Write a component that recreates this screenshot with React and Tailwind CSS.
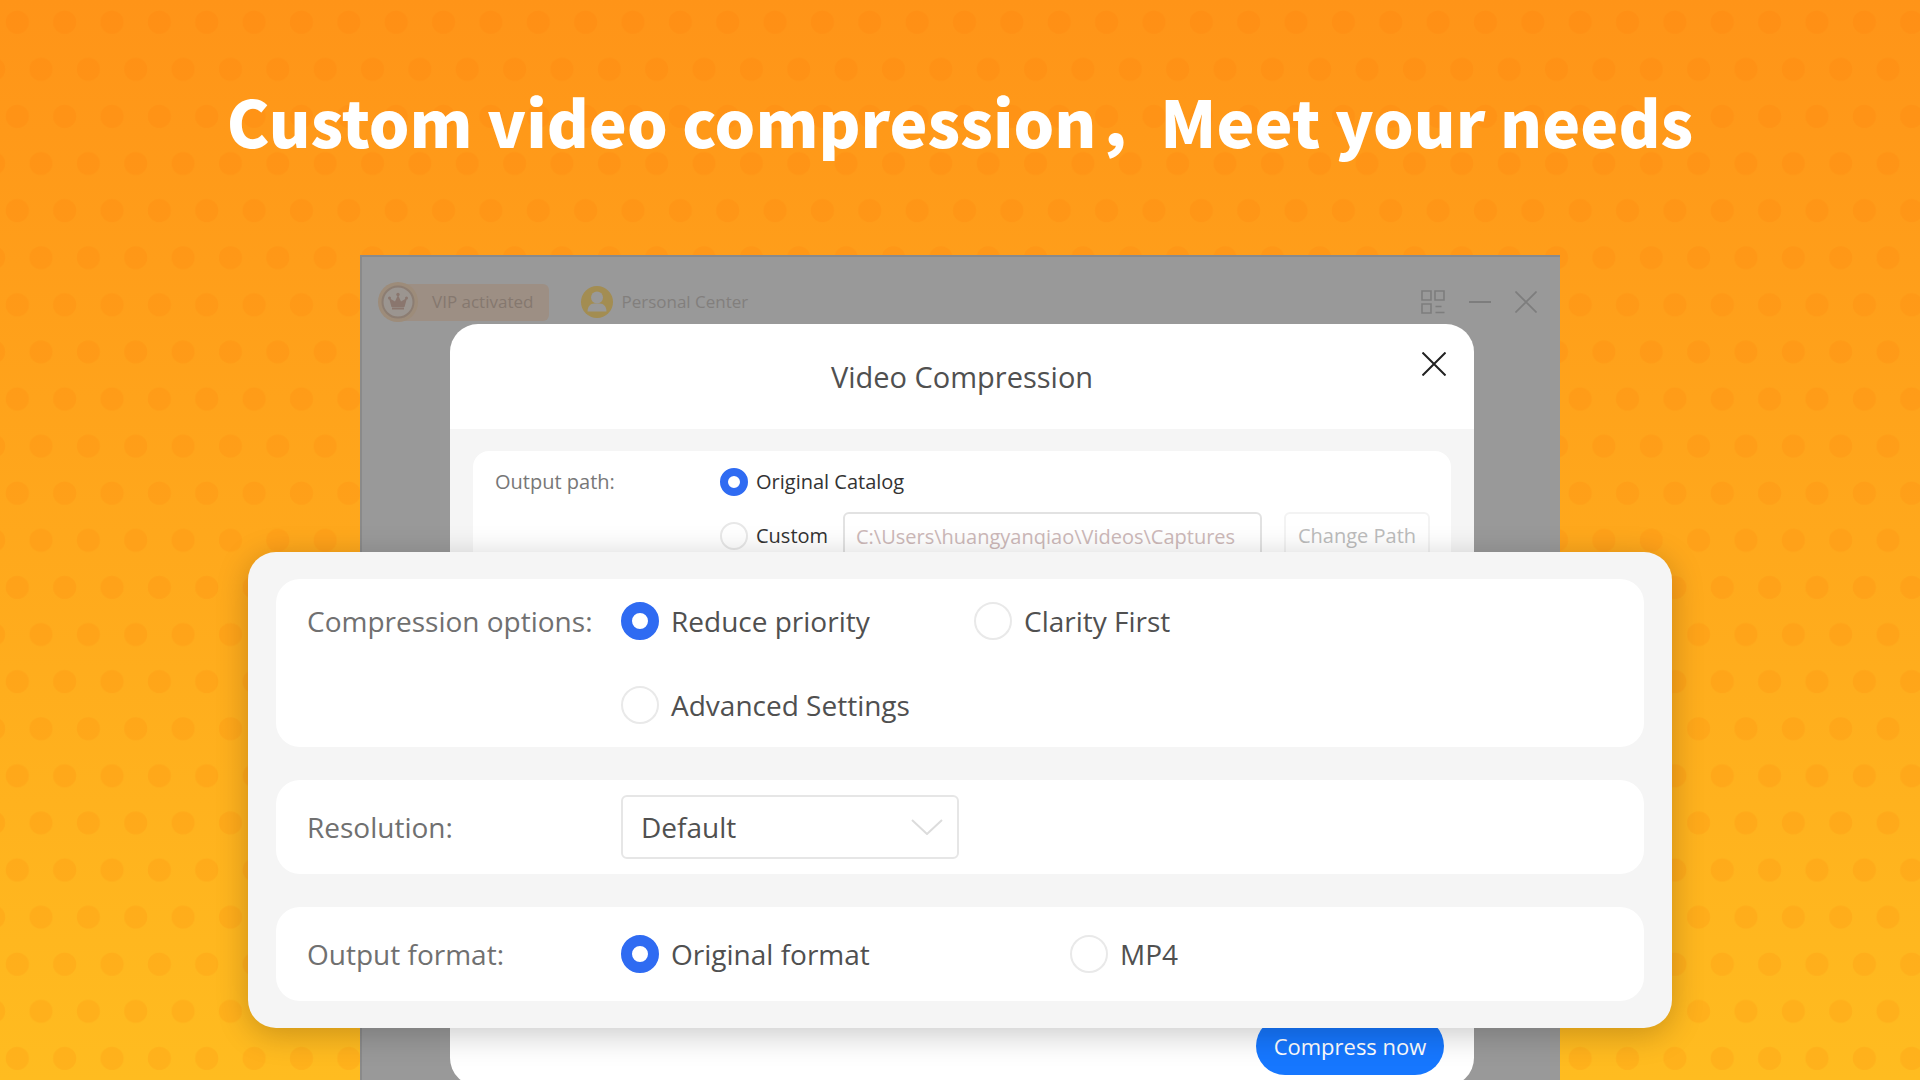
import React from 'react';

const Background = () => (
  <svg className="absolute inset-0 h-full w-full" aria-hidden="true">
    <defs>
      <pattern id="dots" width="47.36" height="94.2" patternUnits="userSpaceOnUse">
        <circle cx="17.3" cy="22.2" r="11.6" fill="#ff7000" fillOpacity="0.12" />
        <circle cx="41" cy="69.3" r="11.6" fill="#ff7000" fillOpacity="0.12" />
        <circle cx="-6.36" cy="69.3" r="11.6" fill="#ff7000" fillOpacity="0.12" />
      </pattern>
    </defs>
    <rect width="100%" height="100%" fill="url(#dots)" />
  </svg>
);

const CrossIcon = ({ className, strokeWidth }) => (
  <svg className={className} viewBox="0 0 24 24" fill="none" stroke="currentColor" strokeWidth={strokeWidth}>
    <path d="M0.5 0.5l23 23M23.5 0.5l-23 23" />
  </svg>
);

const CrownIcon = () => (
  <svg className="h-10 w-10" viewBox="0 0 40 40" fill="none">
    <circle cx="20" cy="20" r="20" fill="#9d8c7a" />
    <circle cx="20" cy="20" r="15.500" fill="#9b9590" stroke="#8c7d72" strokeWidth="2" />
    <path d="M13.500 25l-2.500-9 6 3.500L20 13l3 6.500 6-3.500-2.500 9z" fill="#8a766e" />
    <path d="M14 26.500h12" stroke="#8a766e" strokeWidth="2" />
    <circle cx="11.500" cy="16" r="1.500" fill="#8a766e" />
    <circle cx="20" cy="12.500" r="1.700" fill="#8a766e" />
    <circle cx="28.500" cy="16" r="1.500" fill="#8a766e" />
  </svg>
);

const UserIcon = () => (
  <svg className="h-8 w-8" viewBox="0 0 32 32" fill="none">
    <circle cx="16" cy="16" r="16" fill="#a38d52" />
    <circle cx="16" cy="11.500" r="6" fill="#999" />
    <path d="M6.500 25.500c0-5 3-8 6.500-8h6c3.500 0 6.500 3 6.500 8z" fill="#999" />
  </svg>
);

const LayoutIcon = () => (
  <svg className="h-6 w-6" viewBox="0 0 24 24" fill="none" stroke="currentColor" strokeWidth="1.600">
    <path d="M1 1h9v9H1zM14 1h9v9h-9zM1 14h9v9H1zM14.500 16.500h6M14.500 22.500h9" />
  </svg>
);

const SmallRadio = ({ label, checked }) => (
  <label className="flex items-center gap-2 text-[#333]">
    <input
      type="radio"
      name="path"
      defaultChecked={checked}
      className="h-7 w-7 appearance-none rounded-full border-2 border-[#e8e8e8] bg-white checked:border-8 checked:border-[#2f6bf2]"
    />
    {label}
  </label>
);

const Radio = ({ name, label, checked }) => (
  <label className="flex items-center gap-3 text-[#505050]">
    <input
      type="radio"
      name={name}
      defaultChecked={checked}
      className="h-[38px] w-[38px] appearance-none rounded-full border-2 border-[#e9e9e9] bg-white checked:border-[11px] checked:border-[#2f6bf2]"
    />
    {label}
  </label>
);

const Row = ({ label, htmlFor, children }) => (
  <div className="flex min-h-[94px] items-center rounded-3xl bg-white px-[31px]">
    {htmlFor ? (
      <label htmlFor={htmlFor} className="w-[314px] shrink-0">{label}</label>
    ) : (
      <span className="w-[314px] shrink-0">{label}</span>
    )}
    {children}
  </div>
);

const OptionsPanel = () => (
  <div className="absolute top-[297px] left-1/2 flex w-[1424px] -translate-x-1/2 flex-col gap-[33px] rounded-[28px] bg-[#f5f5f5] px-7 py-[27px] text-[28px] text-[#707070] shadow-[0_6px_32px_rgba(0,0,0,0.22)]">
    <div className="flex items-start rounded-3xl bg-white px-[31px] py-[18px]">
      <span className="w-[314px] shrink-0 leading-[48px]">Compression options:</span>
      <div className="flex flex-wrap gap-y-9">
        <div className="flex h-12 w-[353px] items-center">
          <Radio name="compression" label="Reduce priority" checked />
        </div>
        <div className="flex h-12 items-center">
          <Radio name="compression" label="Clarity First" />
        </div>
        <div className="flex h-12 w-full items-center">
          <Radio name="compression" label="Advanced Settings" />
        </div>
      </div>
    </div>

    <Row label="Resolution:" htmlFor="resolution">
      <div className="relative">
        <select
          id="resolution"
          className="block h-16 w-[338px] appearance-none rounded-md border-2 border-[#e6e6e6] bg-white px-[18px] text-[#505050]"
        >
          <option>Default</option>
        </select>
        <svg
          className="pointer-events-none absolute top-6 right-4 h-4 w-8"
          viewBox="0 0 32 16"
          fill="none"
          stroke="#dcdcdc"
          strokeWidth="2"
        >
          <path d="M1 1l15 14L31 1" />
        </svg>
      </div>
    </Row>

    <Row label="Output format:">
      <div className="flex items-center">
        <div className="w-[449px]">
          <Radio name="format" label="Original format" checked />
        </div>
        <Radio name="format" label="MP4" />
      </div>
    </Row>
  </div>
);

const CompressionDialog = () => (
  <div className="mt-[2px] mr-[86px] ml-[88px] flex h-[762px] shrink-0 flex-col overflow-hidden rounded-[28px] bg-white text-[20px]">
    <div className="relative flex h-[105px] shrink-0 items-center justify-center">
      <h2 className="text-[29px] text-[#505050]">Video Compression</h2>
      <button type="button" aria-label="Close" className="absolute top-7 right-7 text-[#222]">
        <CrossIcon className="h-6 w-6" strokeWidth="2" />
      </button>
    </div>
    <div className="flex flex-1 flex-col bg-[#f5f5f5] px-[23px] pt-[22px]">
      <div className="flex flex-1 rounded-t-2xl bg-white px-[22px] pt-[11px]">
        <span className="w-[225px] shrink-0 leading-[40px] text-[#777]">Output path:</span>
        <div className="flex flex-col gap-2.5">
          <div className="flex h-10 items-center">
            <SmallRadio label="Original Catalog" checked />
          </div>
          <div className="flex h-12 items-center">
            <div className="w-[123px]">
              <SmallRadio label="Custom" />
            </div>
            <input
              type="text"
              aria-label="Custom path"
              defaultValue="C:\Users\huangyanqiao\Videos\Captures"
              className="h-12 w-[419px] rounded-md border-2 border-[#e2e2e2] px-[11px] text-[#cdb9b9]"
            />
            <button type="button" className="ml-[22px] h-12 w-[146px] rounded-md border-2 border-[#f3f3f3] text-[#bcbcbc]">
              Change Path
            </button>
          </div>
        </div>
      </div>
    </div>
    <div className="flex h-[96px] shrink-0 items-start justify-end px-[30px] pt-[27px]">
      <button type="button" className="h-[58px] w-[188px] rounded-full bg-[#1677ff] text-[22px] text-white">
        Compress now
      </button>
    </div>
  </div>
);

const App = () => (
  <main className="relative flex h-screen flex-col overflow-hidden bg-linear-to-b from-[#ff9418] to-[#ffbc20] font-['Open_Sans','Noto_Sans',sans-serif]">
    <Background />
    <h1 className="relative flex h-[255px] shrink-0 justify-center pt-[72px] font-['Noto_Sans_CJK_SC',sans-serif] text-[64px] leading-[96px] font-black whitespace-nowrap text-white">
      Custom video compression，Meet your needs
    </h1>

    <section className="relative flex-1">
      <div className="mx-auto flex h-full w-[1200px] flex-col border-t-2 border-l-2 border-[#8a8a8a] bg-[#999]">
        <header className="flex shrink-0 items-center pt-[25px] pr-[23px] pl-4 text-[17px] text-[#827f7d]">
          <button type="button" className="flex h-10 items-center">
            <span className="relative -mr-5">
              <CrownIcon />
            </span>
            <span className="flex h-[37px] items-center rounded-md bg-[#9d8f84] pr-4 pl-[34px] text-[#85786f]">
              VIP activated
            </span>
          </button>
          <button type="button" className="ml-8 flex items-center gap-2">
            <UserIcon />
            Personal Center
          </button>
          <div className="ml-auto flex items-center gap-6 text-[#7d7d7d]">
            <button type="button" aria-label="Menu">
              <LayoutIcon />
            </button>
            <button type="button" aria-label="Minimize" className="flex h-6 w-[22px] items-center">
              <span className="h-[2px] w-full bg-[#7d7d7d]" />
            </button>
            <button type="button" aria-label="Close window">
              <CrossIcon className="h-[22px] w-[22px]" strokeWidth="1.8" />
            </button>
          </div>
        </header>
        <CompressionDialog />
      </div>
      <OptionsPanel />
    </section>
  </main>
);

export default App;
